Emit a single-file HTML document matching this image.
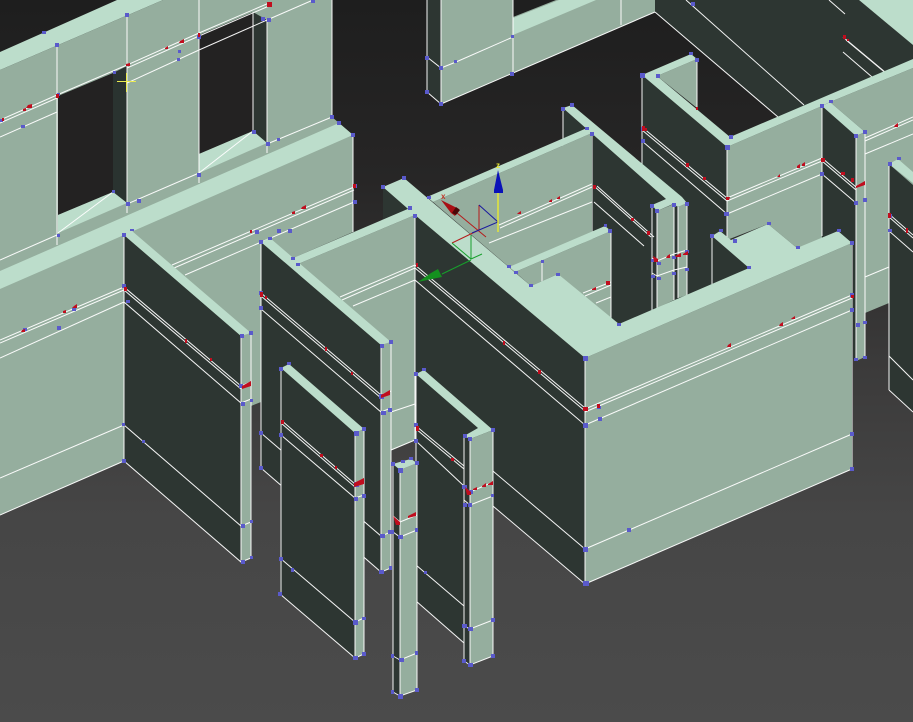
<!DOCTYPE html>
<html><head><meta charset="utf-8"><style>
html,body{margin:0;padding:0;background:#484848;overflow:hidden}
svg{display:block;position:absolute;left:0;top:0}
.l{fill:#95ae9e}.t{fill:#bcddcb}.d{fill:#2d3632}
.w{fill:none;stroke:#fff;stroke-width:1;opacity:.95}
.b{fill:#5a5acb}.r{fill:#c00d1e}
</style></head><body>
<svg width="913" height="722" viewBox="0 0 913 722" xmlns="http://www.w3.org/2000/svg">
<defs><linearGradient id="g" x1="0" y1="0" x2="0" y2="1"><stop offset="0" stop-color="#1e1e1e"/><stop offset=".25" stop-color="#272626"/><stop offset=".5" stop-color="#3b3a3a"/><stop offset=".72" stop-color="#464646"/><stop offset="1" stop-color="#4b4b4b"/></linearGradient></defs>
<rect width="913" height="722" fill="url(#g)"/>

<!-- back: R wall and top-right -->
<polygon class="d" points="600,0 859,0 913,45 913,62 778,117 655,12"/>
<polygon class="t" points="859,0 913,0 913,45"/>
<path class="w" d="M686,0L804,105M655,12L778,117M843,37L885,72M846,40L888,75M843,52L872,77M829,0L845,14"/>

<!-- S wall -->
<polygon class="d" points="427,0 441,0 441,104 427,92"/>
<polygon class="l" points="441,0 655,0 655,12 441,104"/>
<polygon fill="#1f1f1f" points="513,0 556,0 513,17"/>
<polygon class="t" points="513,18 559,0 596,0 513,35"/>
<path class="w" d="M427,57L441,68L456,62L513,37M427,92L441,104L655,12M427,0V92M441,0V104M513,0V73M621,0V25"/>

<!-- A wall -->
<polygon class="t" points="0,52 117,0 163,0 0,70"/>
<polygon class="l" points="0,70 163,0 332,0 332,117 353,135 0,300"/>
<polygon fill="#232222" points="58,96 113,73 113,192 58,215"/>
<polygon fill="#2a3330" points="113,73 127,66 127,203 113,192"/>
<polygon class="t" points="58,215 113,192 127,203 58,233"/>
<polygon fill="#232222" points="199,35 253,12 253,131 199,154"/>
<polygon class="d" points="253,12 267,20 267,143 253,131"/>
<polygon class="t" points="199,154 253,131 267,143 199,173"/>
<path class="w" d="M57,44V245M127,15V213M199,0V183M267,20V153M253,12V131M332,0V117M58,233L113,192M199,173L253,131M0,120L57,95L127,65L199,33L269,3M0,123L57,98M127,68L199,36L269,6M0,137L57,112M127,83L199,50L267,20L313,0M0,260L57,235M127,204L199,173M267,144L332,117"/>

<!-- M, N, O, P, Q -->
<polygon class="l" points="657,76 697,59 697,108"/>
<polygon class="d" points="642,75 727,147 727,240 712,236 712,290 642,320"/>
<polygon class="l" points="830,102 913,68 913,300 889,303 865,313 865,132"/>
<polygon class="l" points="727,147 822,106 822,240 797,248 768,224 727,240"/>
<polygon class="t" points="642,75 691,54 697,59 657,76 730,137 913,59 913,68 830,102 822,106 727,147"/>
<polygon class="d" points="822,106 856,136 856,361 852,358 822,250"/>
<polygon class="t" points="822,106 830,102 865,132 856,136"/>
<polygon class="l" points="856,136 865,132 865,357 856,361"/>
<polygon class="d" points="889,164 913,185 913,412 889,390"/>
<polygon class="t" points="889,164 898,159 913,172 913,183"/>
<polygon class="d" points="712,236 749,268 712,285"/>
<path class="w" d="M642,75V165M697,59V108M727,147V240M712,236V285M822,106V236M856,136V361M865,132V357M889,164V390M852,243V469M642,127L727,198L822,158L856,187M642,130L727,201L822,161L856,190M642,141L727,214L822,174L856,203M865,138L913,117M865,141L913,120M865,154L913,134M865,277L889,267M889,214L913,235M889,217L913,238M889,231L913,252M889,356L913,380M889,390L913,412"/>

<!-- L wall and pillars -->
<polygon class="d" points="563,108 666,199 652,205 652,315 619,326 592,300 563,300"/>
<polygon class="d" points="652,205 687,203 687,295 652,312"/>
<polygon class="l" points="657,211 674,204 674,300 657,308"/>
<polygon class="l" points="678,207 687,203 687,295 678,298"/>
<polygon class="t" points="563,108 572,105 682,197 687,203 678,207 673,204 657,211 652,205 666,199"/>
<path class="w" d="M563,108V165M592,133V240M652,205V312M657,211V308M674,204V300M678,207V298M687,203V295M594,186L651,237M597,186L654,237M594,202L644,246M652,258L657,261L674,254L687,250M652,273L657,276L674,270L687,267"/>

<!-- J and K -->
<polygon class="l" points="433,202 592,133 592,240 509,267"/>
<polygon class="t" points="427,197 587,128 592,133 433,202"/>
<polygon class="l" points="515,272 611,231 611,322 558,274 531,286"/>
<polygon class="t" points="509,267 605,226 611,231 515,272"/>
<path class="w" d="M499,225L592,184M500,228L592,187M489,243L592,202M611,231V322M542,262V283M583,293L611,282M585,296L611,285M596,303L611,297"/>

<!-- F and H with main strip -->
<polygon class="d" points="383,187 410,208 383,219"/>
<polygon class="d" points="415,215 585,358 585,584 415,440"/>
<polygon class="l" points="585,358 852,243 852,469 585,584"/>
<polygon class="t" points="383,187 404,178 531,286 558,274 619,324 749,268 712,236 720,231 731,240 768,224 797,248 838,231 852,243 585,358 415,215"/>
<path class="w" d="M585,358V584M415,265L585,408M415,268L585,411M415,280L585,425M415,405L585,549M415,440L585,584M585,409L852,295M585,412L852,298M585,425L852,310M585,549L852,434M585,584L852,469"/>

<!-- B wall -->
<polygon class="l" points="0,289 124,235 124,461 0,515"/>
<polygon class="l" points="124,235 353,135 353,232 261,272 261,402 251,406 124,300"/>
<polygon class="t" points="0,271 339,123 353,135 124,235 0,289"/>
<path class="w" d="M353,135V232M0,340L124,287M0,343L124,290M0,358L124,302M172,265L354,187M174,268L354,190M185,275L354,202M0,478L124,425M0,515L124,461"/>

<!-- C wall -->
<polygon class="d" points="124,235 241,336 241,562 124,461"/>
<polygon class="t" points="124,235 132,231 251,333 241,336"/>
<polygon class="l" points="241,336 251,333 251,558 241,562"/>
<path class="w" d="M124,235V461M241,336V562M251,333V558M124,287L241,386L251,382M124,290L241,389M124,302L241,403L251,399M124,425L241,526L251,522M124,461L241,562L251,558"/>

<!-- E wall -->
<polygon class="l" points="298,264 415,215 415,440 381,455 298,490"/>
<polygon class="t" points="293,258 410,208 415,215 298,264"/>
<path class="w" d="M415,215V440M340,297L415,265M342,300L415,268M353,306L415,280M391,412L415,404M391,450L415,440"/>

<!-- D wall -->
<polygon class="d" points="261,242 381,345 381,572 261,468"/>
<polygon class="t" points="261,242 270,238 391,342 381,345"/>
<polygon class="l" points="381,345 391,342 391,568 381,572"/>
<path class="w" d="M261,242V468M381,345V572M391,342V568M261,293L381,395L391,391M261,296L381,398M261,309L381,412L391,408M261,433L381,536L391,532M261,468L381,572L391,568"/>

<!-- G wall -->
<polygon class="d" points="416,374 478,428 464,436 464,643 416,601"/>
<polygon class="d" points="464,436 470,439 470,665 464,661"/>
<polygon class="t" points="416,374 424,370 493,430 470,439 464,436 478,428"/>
<polygon class="l" points="470,439 493,430 493,656 470,665"/>
<path class="w" d="M416,374V601M464,436V661M470,439V665M493,430V656M416,426L464,466M416,429L464,469M416,441L464,486M464,487L470,492L493,482M464,500L470,505L493,496M416,565L464,606M464,626L470,629L493,620M416,601L464,643M464,661L470,665L493,656"/>

<!-- T wall -->
<polygon class="d" points="281,368 355,433 355,658 280,594"/>
<polygon class="t" points="281,368 289,364 364,429 355,433"/>
<polygon class="l" points="355,433 364,429 364,654 355,658"/>
<path class="w" d="M281,368V594M355,433V658M364,429V654M281,420L355,484L364,480M281,423L355,487M281,435L355,498L364,495M280,558L355,622L364,618M280,594L355,658L364,654"/>

<!-- small front pillar -->
<polygon class="d" points="393,464 400,470 400,696 393,692"/>
<polygon class="l" points="400,470 417,463 417,690 400,696"/>
<polygon class="t" points="393,464 403,461 411,459 417,463 400,470"/>
<path class="w" d="M393,464V692M400,470V696M417,463V690M393,516L400,522L417,515M393,532L400,537L417,530M393,656L400,660L417,653M393,692L400,696L417,690"/>

<!-- blue vertices -->
<path class="b" d="M42,31h4v3h-4zM55,43h4v4h-4zM125,13h4v4h-4zM57,93h3v3h-3zM261,17h4v4h-4zM267,18h4v4h-4zM197,35h4v4h-4zM177,58h3v3h-3zM330,115h4v4h-4zM337,121h4v4h-4zM351,133h4v4h-4zM353,184h4v4h-4zM353,200h4v4h-4zM277,229h4v4h-4zM288,229h4v4h-4zM255,230h4v4h-4zM122,233h4v4h-4zM130,229h4v2h-4zM259,240h4v4h-4zM268,237h4v3h-4zM291,257h4v3h-4zM296,263h4v3h-4zM408,206h4v4h-4zM413,214h4v4h-4zM240,334h4v4h-4zM249,331h4v4h-4zM380,344h4v4h-4zM389,340h4v4h-4zM427,196h4v3h-4zM381,185h4v4h-4zM402,176h4v4h-4zM113,71h3v3h-3zM126,202h4v4h-4zM112,190h3v3h-3zM137,199h4v4h-4zM57,234h3v3h-3zM197,173h4v4h-4zM252,130h4v4h-4zM266,142h4v4h-4zM277,138h3v3h-3zM425,56h4v4h-4zM439,66h4v4h-4zM425,90h4v4h-4zM439,102h4v4h-4zM454,60h3v3h-3zM511,35h3v3h-3zM510,72h4v4h-4zM691,2h4v4h-4zM561,107h4v4h-4zM570,103h4v4h-4zM585,127h4v3h-4zM590,132h4v4h-4zM604,224h3v3h-3zM608,229h4v4h-4zM507,265h4v3h-4zM514,271h4v3h-4zM529,284h4v3h-4zM556,273h4v3h-4zM617,323h4v3h-4zM541,260h3v3h-3zM640,73h5v5h-5zM656,74h4v4h-4zM689,52h4v3h-4zM695,58h4v4h-4zM725,145h5v5h-5zM729,135h4v4h-4zM820,104h4v4h-4zM829,100h4v3h-4zM854,134h4v4h-4zM863,130h4v4h-4zM888,162h4v4h-4zM897,157h4v3h-4zM710,234h4v4h-4zM719,229h4v3h-4zM733,239h4v4h-4zM767,222h4v3h-4zM796,246h4v3h-4zM747,266h4v3h-4zM837,229h4v3h-4zM850,241h4v4h-4zM583,356h5v5h-5zM650,204h4v4h-4zM655,209h4v4h-4zM672,203h4v4h-4zM685,202h4v4h-4zM651,259h4v3h-4zM657,262h4v3h-4zM672,256h4v3h-4zM685,250h4v3h-4zM651,275h4v3h-4zM657,277h4v3h-4zM672,272h4v3h-4zM685,268h4v3h-4zM583,423h5v5h-5zM583,407h5v4h-5zM724,212h5v4h-5zM641,139h4v4h-4zM641,127h4v4h-4zM820,172h4v4h-4zM854,201h4v4h-4zM863,198h4v4h-4zM888,229h4v3h-4zM888,214h4v4h-4zM856,323h4v4h-4zM863,321h4v3h-4zM854,358h4v3h-4zM863,356h4v3h-4zM850,432h4v4h-4zM850,467h4v4h-4zM850,308h4v4h-4zM850,293h4v4h-4zM583,547h5v5h-5zM583,581h6v5h-6zM627,528h4v4h-4zM598,417h4v4h-4zM597,406h4v3h-4zM122,284h4v4h-4zM126,300h4v3h-4zM57,326h4v4h-4zM72,308h4v3h-4zM23,328h4v3h-4zM142,440h3v3h-3zM122,459h4v4h-4zM122,423h3v3h-3zM239,384h4v4h-4zM241,402h4v4h-4zM250,399h3v3h-3zM241,524h4v4h-4zM250,520h3v3h-3zM241,560h4v4h-4zM250,556h3v3h-3zM259,291h4v4h-4zM259,306h4v4h-4zM259,431h4v4h-4zM259,466h4v4h-4zM379,394h5v5h-5zM381,411h5v4h-5zM388,408h4v4h-4zM380,534h5v4h-5zM388,530h3v4h-3zM379,570h5v4h-5zM389,566h3v4h-3zM279,367h4v4h-4zM287,362h4v3h-4zM354,431h5v5h-5zM362,427h4v4h-4zM279,433h4v4h-4zM279,557h4v4h-4zM291,568h3v4h-3zM278,592h4v4h-4zM354,482h5v5h-5zM354,497h4v4h-4zM362,494h4v4h-4zM353,620h5v5h-5zM362,617h4v3h-4zM353,656h5v4h-5zM362,652h4v4h-4zM414,372h4v4h-4zM422,368h4v3h-4zM463,434h4v4h-4zM468,437h4v4h-4zM491,428h4v4h-4zM414,423h4v4h-4zM414,439h4v4h-4zM424,571h3v3h-3zM462,485h5v4h-5zM468,490h5v4h-5zM463,503h4v4h-4zM468,503h4v4h-4zM491,494h3v3h-3zM462,624h5v4h-5zM468,627h5v4h-5zM491,618h4v4h-4zM462,659h4v4h-4zM468,663h5v4h-5zM491,654h4v4h-4zM391,462h4v4h-4zM398,468h5v5h-5zM401,460h4v3h-4zM409,457h4v3h-4zM415,461h4v4h-4zM391,530h3v4h-3zM398,535h5v4h-5zM415,528h3v4h-3zM391,654h3v4h-3zM399,658h5v4h-5zM415,651h3v4h-3zM391,690h3v4h-3zM398,694h5v5h-5zM415,688h4v4h-4zM0,119h3v3h-3zM21,125h4v3h-4zM178,50h3v3h-3zM311,0h4v3h-4z"/>

<!-- red -->
<path class="r" d="M126,64l4-1v3h-4zM267,2h5v5h-5zM198,33h2v4h-2zM180,41l4,-2v4h-5zM165,48l3,-2v3h-3zM28,105l4,-1v4h-6zM23,109l3,-1v3h-3zM56,94h3v4h-3zM353,184h3v4h-3zM302,207l4,-2v4h-5zM292,212l3,-1v3h-3zM250,230h2v3h-2zM124,287h3v4h-3zM74,306l3,-2v4h-5zM63,311l3,-1v3h-3zM22,330l3,-1v3h-4zM185,339h2v4h-2zM210,358h2v3h-2zM242,386l9,-5v5l-9,3zM260,292h3v5h-3zM265,296h2v3h-2zM325,347h2v4h-2zM351,372h2v3h-2zM381,395l9,-5v5l-9,3zM281,420h3v4h-3zM320,454h3v3h-3zM335,466h2v3h-2zM354,483l10,-5v6l-10,3zM416,426h3v5h-3zM451,458h3v3h-3zM465,487l6,5v3h-4zM473,489l4,-2v3h-4zM482,486l4,-3v4h-4zM488,484l5,-3v4h-5zM393,516l7,6v3h-4zM408,516l8,-4v4l-8,2zM416,263h2v4h-2zM503,341h2v4h-2zM538,370h3v4h-3zM583,407h5v4h-5zM597,404h3v4h-3zM728,345l3,-2v4h-4zM780,324l3,-2v4h-4zM792,318l3,-2v3h-4zM851,295h3v3h-3zM518,213l3,-2v3h-4zM549,201l3,-2v3h-3zM557,198l3,-2v3h-3zM593,185h3v4h-3zM647,231h3v4h-3zM631,218h3v3h-3zM592,289l4,-2v3h-4zM606,281h4v4h-4zM653,256l5,3v3h-4zM667,256l3,-2v4h-4zM675,256l6,-3v4h-5zM683,254l5,-3v4h-5zM642,126h3v5h-3zM645,128h2v3h-2zM686,163h3v4h-3zM703,177h3v3h-3zM726,197h4l-1,3h-3zM778,176l2,-2v3h-3zM797,166l3,-2v4h-3zM802,164l3,-2v4h-3zM821,158h4v4h-4zM841,172h4v3h-4zM851,178h3v4h-3zM856,186l9,-5v4l-9,3zM895,125l3,-2v4h-4zM843,35h3v4h-3zM847,39h2v2h-2zM888,213h3v5h-3zM906,228h2v5h-2zM696,107h2v3h-2zM2,118h2v3h-2z"/>

<!-- gizmo -->
<path fill="none" stroke="#b51b1b" d="M457,213L486,237M479,205V230M452,243L479,230"/>
<path fill="none" stroke="#1a1a9e" d="M479,205L498,222L472,233"/>
<path fill="none" stroke="#17a02c" d="M452,243L471,259L482,254M471,235V259M442,274L471,260"/>
<line x1="498" y1="192" x2="498" y2="232" stroke="#eaea30" stroke-width="1.4"/>
<polygon fill="#0a12b8" points="498,170 503,190 503,193 494,193 494,190"/>
<polygon fill="#a80f14" points="441,200 459,209 455,216 451,213"/>
<polygon fill="#4a0808" points="456,207 460,210 456,215 452,213"/>
<polygon fill="#14901f" points="418,282 431,273 438,269 442,277 432,279"/>
<text x="441" y="199" font-family="Liberation Sans, sans-serif" font-size="8" font-weight="700" fill="#c0392b">x</text>
<text x="496" y="168" font-family="Liberation Sans, sans-serif" font-size="8" font-weight="700" fill="#e8e830">z</text>

<!-- cursor -->
<path fill="none" stroke="#eaea50" stroke-width="1" d="M117,81.5H136M126.5,73V92"/>
</svg>
</body></html>
